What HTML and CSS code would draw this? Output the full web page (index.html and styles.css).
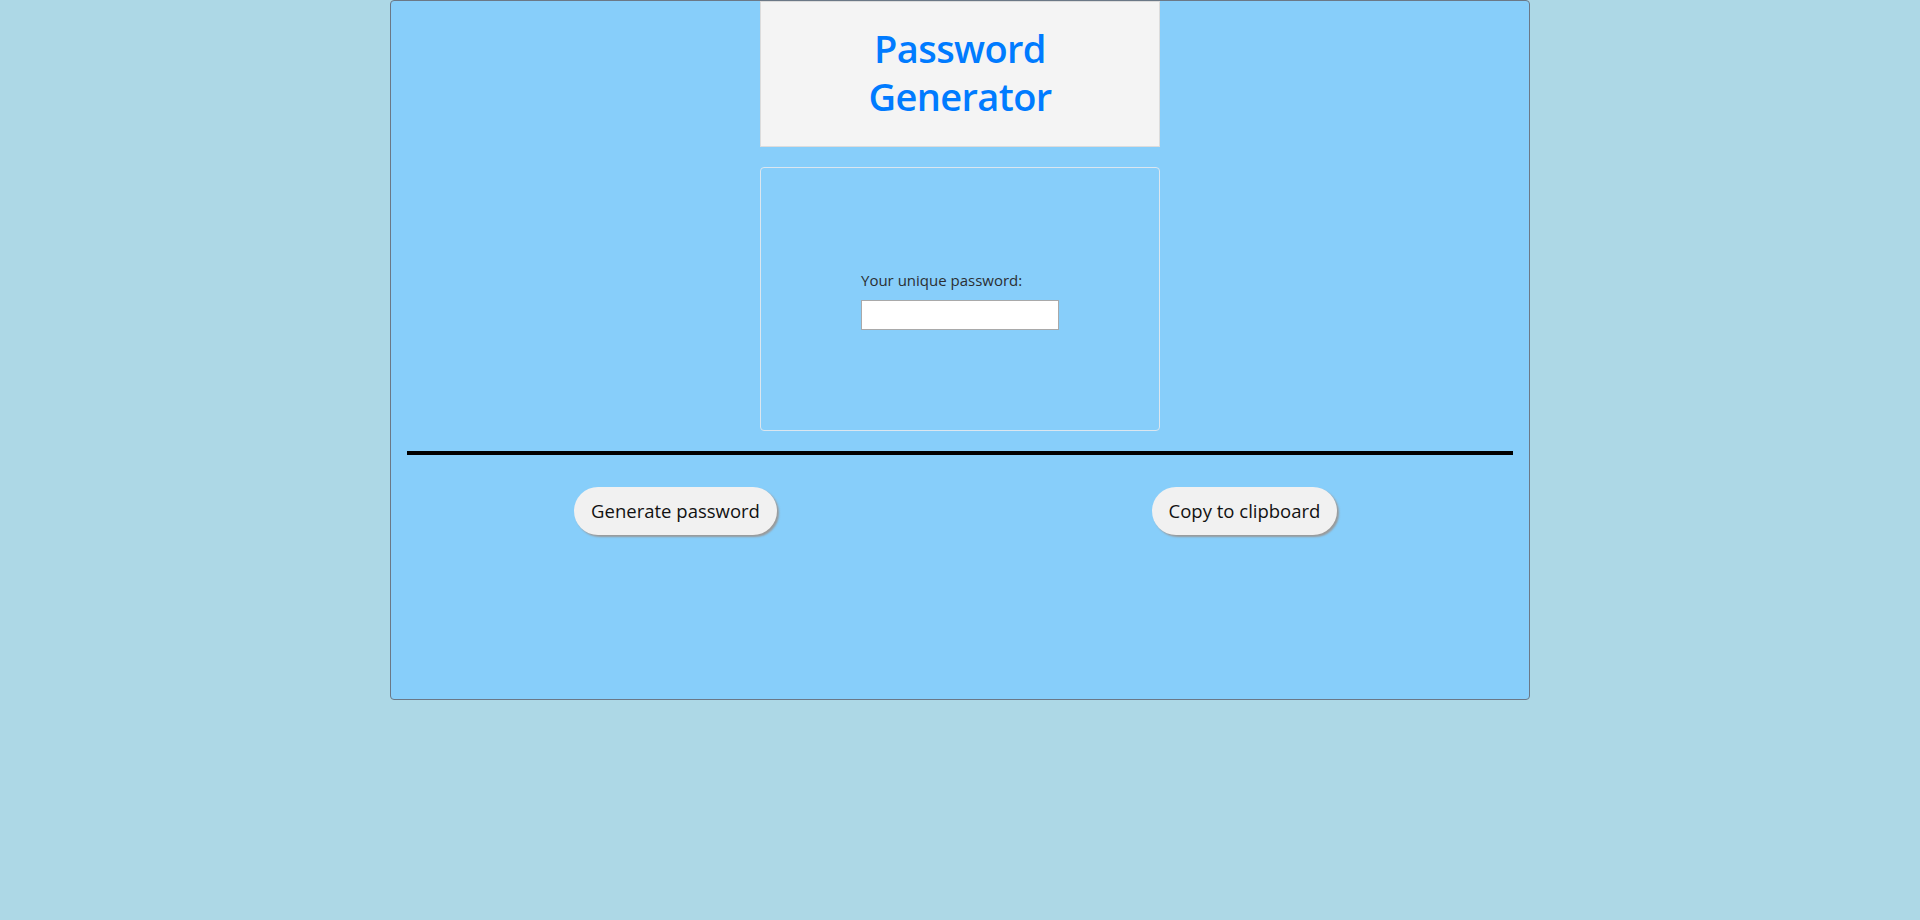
FILE: index.html
```html
<!DOCTYPE html>
<html lang="en">
<head>
<meta charset="utf-8">
<title>Password Generator</title>
<link rel="stylesheet" href="styles.css">
</head>
<body>
  <main class="app">
    <header class="title-box">
      <h1 class="title">Password Generator</h1>
    </header>
    <section class="card">
      <div class="field">
        <label class="field-label" for="password">Your unique password:</label>
        <input class="field-input" id="password" type="text" readonly>
      </div>
    </section>
    <hr class="divider">
    <div class="actions">
      <button class="pill-btn" type="button">Generate password</button>
      <button class="pill-btn" type="button">Copy to clipboard</button>
    </div>
  </main>
</body>
</html>
```
FILE: styles.css
```css
html, body {
  margin: 0;
  padding: 0;
}

body {
  background: #add8e6;
  font-family: "Segoe UI", "Open Sans", "Noto Sans", sans-serif;
  color: #212529;
}

.app {
  box-sizing: border-box;
  width: 1140px;
  height: 700px;
  margin: 0 auto;
  background: #87cefa;
  border: 1px solid #6b7886;
  border-radius: 4px;
  display: flex;
  flex-direction: column;
}

.title-box {
  box-sizing: border-box;
  width: 400px;
  height: 146px;
  margin: 0 auto;
  background: #f4f4f4;
  border: 1px solid #dcdcdc;
  padding: 22px 70px 0;
}

.title {
  margin: 0;
  text-align: center;
  color: #007bff;
  font-size: 38px;
  font-weight: 600;
  letter-spacing: -0.6px;
  line-height: 48px;
}

.card {
  box-sizing: border-box;
  width: 400px;
  height: 264px;
  margin: 20px auto 0;
  border: 1px solid #dbe6ef;
  border-radius: 4px;
  display: flex;
  align-items: center;
  justify-content: center;
}

.field {
  display: flex;
  flex-direction: column;
}

.field-label {
  font-size: 15px;
  line-height: 24px;
  margin-bottom: 8px;
  color: #2b2f33;
}

.field-input {
  box-sizing: border-box;
  width: 198px;
  height: 30px;
  margin: 0;
  border: 1px solid #a9a9a9;
  background: #fff;
  padding: 2px 4px;
}

.divider {
  margin: 20px 16px 0;
  border: 0;
  height: 4px;
  background: #000;
}

.actions {
  display: grid;
  grid-template-columns: 1fr 1fr;
  justify-items: center;
  padding-top: 32px;
}

.pill-btn {
  font-family: inherit;
  font-size: 18.5px;
  line-height: 28px;
  padding: 10px 17px;
  border: 0;
  border-radius: 25px;
  background: #f1f1f1;
  color: #111;
  box-shadow: 2px 2px 2px #9a9a9a;
  cursor: pointer;
}
```
